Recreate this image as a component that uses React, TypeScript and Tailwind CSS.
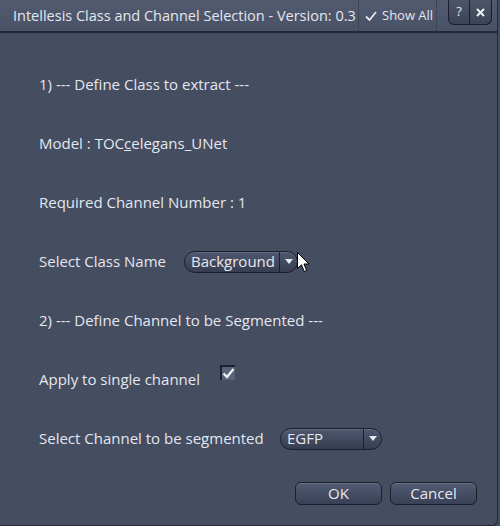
import React from 'react';

const font = { fontFamily: '"Open Sans", "Noto Sans", sans-serif' };

function Dropdown({ label, width }: { label: string; width: string }) {
  return (
    <div
      className={`flex h-[22px] ${width} items-stretch rounded-full border border-[#1b1f2b] bg-gradient-to-b from-[#4f5870] to-[#363d50] shadow-[inset_0_1px_0_rgba(255,255,255,0.12)]`}
    >
      <div className="flex flex-1 items-center pl-[6px] text-[15px] text-[#e6e8ee]">{label}</div>
      <div className="flex w-[18px] items-center justify-center border-l border-[#1b1f2b]">
        <svg width="8" height="5" viewBox="0 0 8 5">
          <path d="M0 0 L8 0 L4 5 Z" fill="#e6e8ee" />
        </svg>
      </div>
    </div>
  );
}

function Button({ label }: { label: string }) {
  return (
    <button className="flex h-[23px] w-[87px] items-center justify-center rounded-[6px] border border-[#1b1f2b] bg-gradient-to-b from-[#535c74] to-[#394056] text-[15px] text-[#e6e8ee] shadow-[inset_0_1px_0_rgba(255,255,255,0.15)]">
      {label}
    </button>
  );
}

export default function App() {
  return (
    <div className="relative h-[526px] w-[500px] overflow-hidden bg-[#454d61]" style={font}>
      {/* window frame */}
      <div className="flex h-[526px] w-[498px] flex-col rounded-br-[6px] border-r border-b border-[#232838] bg-[#454d61]">
        {/* title bar */}
        <div className="flex h-[33px] items-stretch border-b-2 border-[#23283a] bg-gradient-to-b from-[#525a70] to-[#4a5268]">
          <div className="flex w-[358px] items-center whitespace-nowrap pl-[13px] text-[14.5px] text-[#e4e7ee]">
            Intellesis Class and Channel Selection - Version: 0.3
          </div>
          <div className="flex w-[79px] items-center gap-[5px] whitespace-nowrap border-x border-[#3e4558] pl-[6px] text-[13px] text-[#e4e7ee]">
            <svg width="12" height="10" viewBox="0 0 12 10">
              <path d="M1 5.5 L4.5 9 L11 1" stroke="#e4e7ee" strokeWidth="1.8" fill="none" />
            </svg>
            Show All
          </div>
          <div className="flex flex-1 items-start justify-end pr-[5px]">
            <div className="flex h-[25px] overflow-hidden rounded-b-[6px] border border-t-0 border-[#1b1f2b] bg-gradient-to-b from-[#4d5569] to-[#3d4458]">
              <div className="flex w-[21px] items-center justify-center border-r border-[#1b1f2b] text-[13px] text-[#e4e7ee]">?</div>
              <div className="flex w-[21px] items-center justify-center">
                <svg width="9" height="9" viewBox="0 0 9 9">
                  <path d="M1 1 L8 8 M8 1 L1 8" stroke="#eef0f4" strokeWidth="2" />
                </svg>
              </div>
            </div>
          </div>
        </div>

        {/* content */}
        <div className="flex flex-col pl-[39px] pt-[22px] text-[15px] text-[#e4e7ee]">
          <div className="flex h-[59px] items-center">1) --- Define Class to extract ---</div>
          <div className="flex h-[59px] items-center">
            Model : TOC<span className="underline">c</span>elegans_UNet
          </div>
          <div className="flex h-[59px] items-center">Required Channel Number : 1</div>
          <div className="flex h-[59px] items-center">
            <span className="w-[145px]">Select Class Name</span>
            <Dropdown label="Background" width="w-[114px]" />
          </div>
          <div className="flex h-[59px] items-center">2) --- Define Channel to be Segmented ---</div>
          <div className="flex h-[59px] items-center">
            <span className="w-[181px]">Apply to single channel</span>
            <div className="mb-[15px] flex h-[15px] w-[15px] items-center justify-center border-l-2 border-t-2 border-[#1e2230] bg-[#5a6278]">
              <svg width="13" height="11" viewBox="0 0 13 11">
                <path d="M1.5 5.5 L5 9 L11.5 1" stroke="#f2f4f8" strokeWidth="2.2" fill="none" />
              </svg>
            </div>
          </div>
          <div className="flex h-[59px] items-center">
            <span className="w-[241px]">Select Channel to be segmented</span>
            <Dropdown label="EGFP" width="w-[102px]" />
          </div>
        </div>

        <div className="flex justify-end gap-[8px] pr-[20px] pt-[14px]">
          <Button label="OK" />
          <Button label="Cancel" />
        </div>
      </div>

      {/* mouse cursor */}
      <svg className="absolute left-[297px] top-[252px]" width="13" height="21" viewBox="0 0 13 21">
        <path d="M0.5 0.5 L0.5 16.5 L4.5 12.8 L7.2 19.5 L9.6 18.5 L7 12 L12 12 Z" fill="#ffffff" stroke="#000000" strokeWidth="1" />
      </svg>
    </div>
  );
}
